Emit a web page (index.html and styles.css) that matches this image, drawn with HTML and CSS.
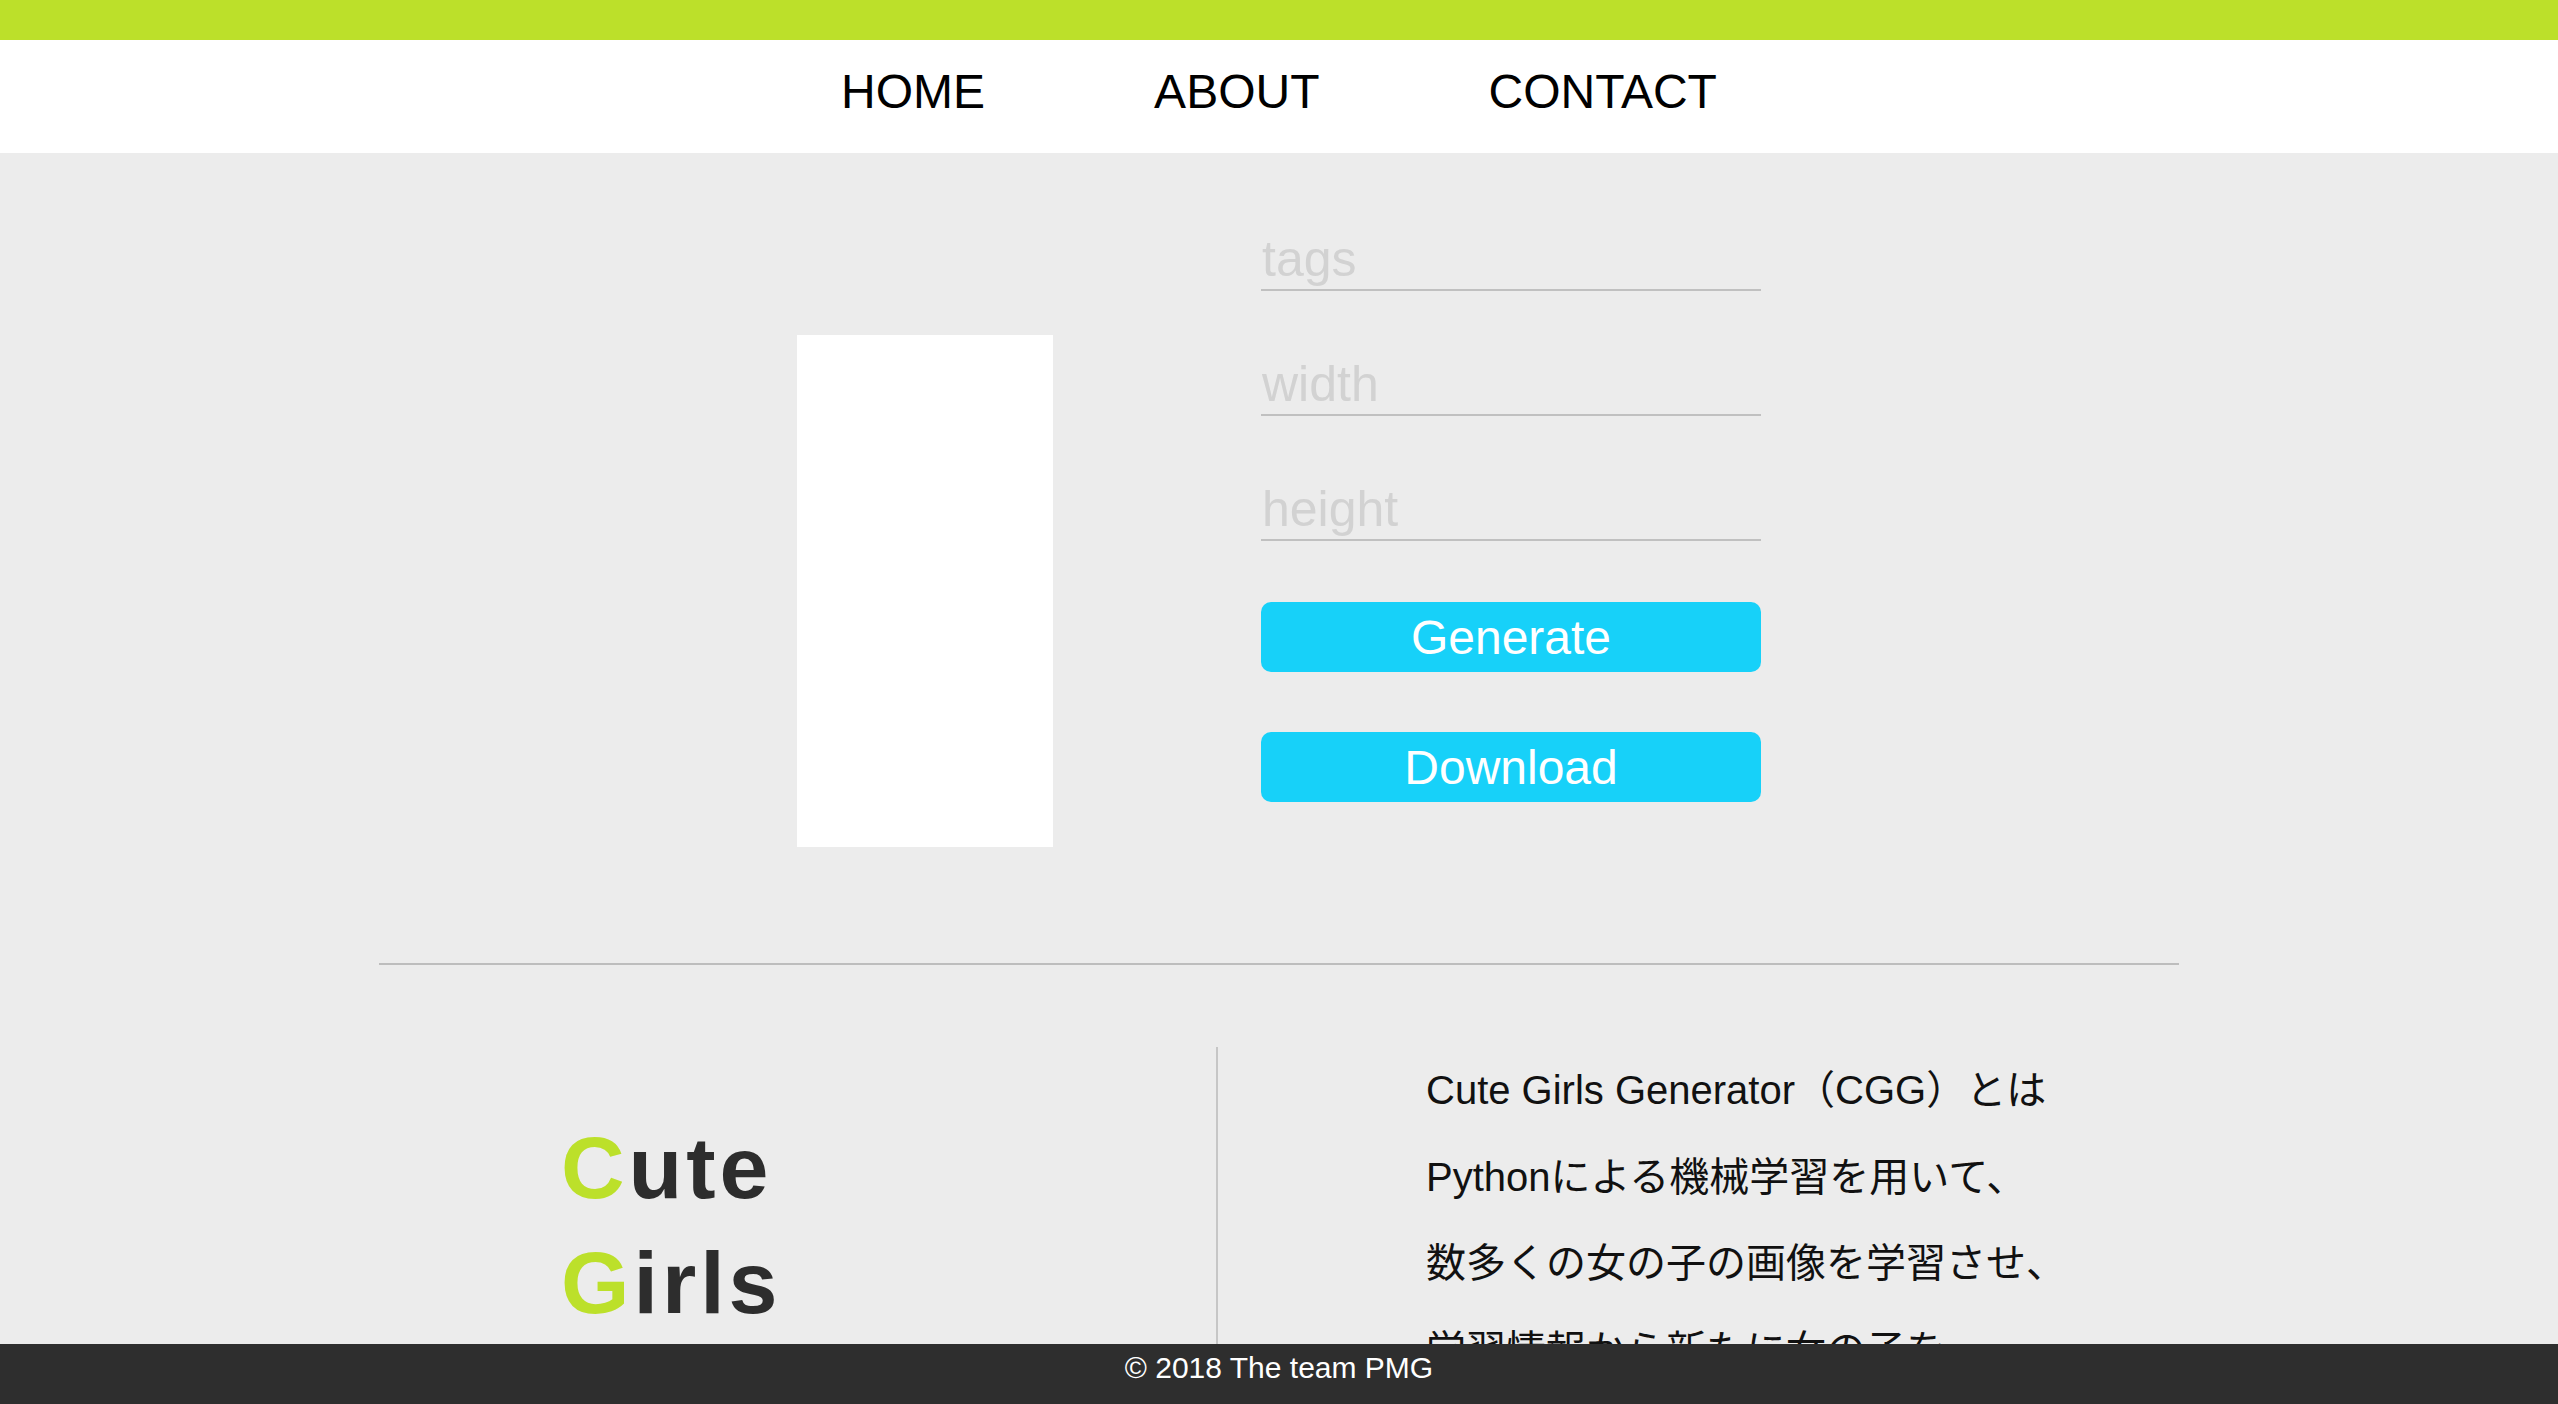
FILE: index.html
```html
<!DOCTYPE html>
<html lang="ja">
<head>
<meta charset="utf-8">
<title>Cute Girls Generator</title>
<link rel="stylesheet" href="styles.css">
</head>
<body>
<header class="site-header">
  <nav class="nav">
    <a class="nav-link" href="#">HOME</a>
    <a class="nav-link" href="#">ABOUT</a>
    <a class="nav-link" href="#">CONTACT</a>
  </nav>
</header>
<main class="main">
  <section class="generator">
    <div class="preview"></div>
    <form class="controls">
      <input class="field" type="text" placeholder="tags">
      <input class="field" type="text" placeholder="width">
      <input class="field" type="text" placeholder="height">
      <button class="btn btn-generate" type="button">Generate</button>
      <button class="btn btn-download" type="button">Download</button>
    </form>
  </section>
  <hr class="divider">
  <section class="about">
    <div class="about-title">
      <h1 class="logo"><span class="accent">C</span>ute<br><span class="accent">G</span>irls</h1>
    </div>
    <div class="about-text">
      <p>Cute Girls Generator（CGG）とは</p>
      <p>Pythonによる機械学習を用いて、</p>
      <p>数多くの女の子の画像を学習させ、</p>
      <p>学習情報から新たに女の子を</p>
    </div>
  </section>
</main>
<footer class="site-footer">© 2018 The team PMG</footer>
</body>
</html>
```
FILE: styles.css
```css
html {
  scrollbar-width: none;
}
body {
  margin: 0;
  background: #ececec;
  font-family: "Liberation Sans", Arial, "Noto Sans CJK JP", sans-serif;
  color: #000;
}

.site-header {
  border-top: 40px solid #bce02a;
  background: #fff;
  height: 113px;
}
.nav {
  display: flex;
  justify-content: center;
  gap: 169px;
  padding-top: 24px;
}
.nav-link {
  font-size: 48px;
  line-height: 56px;
  color: #000;
  text-decoration: none;
}

.generator {
  display: flex;
  justify-content: center;
  align-items: flex-start;
  gap: 208px;
  padding-top: 76px;
}
.preview {
  width: 256px;
  height: 512px;
  margin-top: 106px;
  background: #fff;
}
.controls {
  width: 500px;
  display: flex;
  flex-direction: column;
  margin: 0;
}
.field {
  box-sizing: border-box;
  width: 100%;
  height: 62px;
  margin: 0;
  padding: 0 0 0 1px;
  border: none;
  border-bottom: 2px solid #c0c0c0;
  background: transparent;
  font-family: "Liberation Sans", Arial, sans-serif;
  font-size: 50px;
  color: #333;
  outline: none;
}
.field + .field {
  margin-top: 63px;
}
.field::placeholder {
  color: #d2d2d2;
}
.btn {
  width: 100%;
  height: 70px;
  border: none;
  border-radius: 10px;
  background: #17d1f9;
  color: #fff;
  font-family: "Liberation Sans", Arial, sans-serif;
  font-size: 48px;
  padding: 0;
}
.btn-generate {
  margin-top: 61px;
}
.btn-download {
  margin-top: 60px;
}

.divider {
  width: 1800px;
  height: 2px;
  margin: 116px auto 0;
  border: none;
  background: #bdbdbd;
}

.about {
  width: 1800px;
  margin: 82px auto 0;
  display: grid;
  grid-template-columns: 837px 1fr;
}
.about-title {
  padding-left: 182px;
  padding-top: 63px;
}
.logo {
  margin: 0;
  font-size: 88px;
  line-height: 115px;
  font-weight: bold;
  letter-spacing: 4px;
  color: #2d2d2d;
}
.accent {
  color: #bce02a;
}
.about-text {
  border-left: 2px solid #c6c6c6;
  padding-left: 208px;
  font-size: 40px;
  line-height: 86.5px;
  color: #111;
}
.about-text p {
  margin: 0;
}

.site-footer {
  position: fixed;
  left: 0;
  right: 0;
  bottom: 0;
  height: 60px;
  box-sizing: border-box;
  padding-top: 6px;
  background: #2e2e2e;
  color: #fff;
  text-align: center;
  font-size: 30px;
  line-height: 36px;
}
```
